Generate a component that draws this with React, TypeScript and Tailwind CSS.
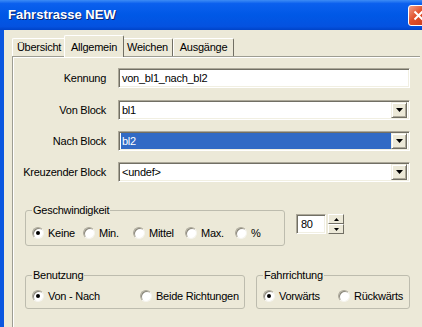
import type { ReactNode } from "react";

const font = { fontFamily: "'Liberation Sans', Arial, sans-serif", letterSpacing: "-0.25px" };

function Sunken({ className = "", children }: { className?: string; children?: ReactNode }) {
  return (
    <div
      className={`flex items-center bg-white border border-t-[#ACA899] border-l-[#ACA899] border-r-white border-b-white shadow-[inset_1px_1px_0_#716F64,inset_-1px_-1px_0_#F1EFE2] ${className}`}
    >
      {children}
    </div>
  );
}

function Arrow({ size = 7 }: { size?: number }) {
  const h = Math.ceil(size / 2);
  return (
    <svg width={size} height={h} viewBox={`0 0 ${size} ${h}`}>
      <polygon points={`0,0 ${size},0 ${size / 2},${h}`} fill="#000" />
    </svg>
  );
}

function Combo({ value, selected = false }: { value: string; selected?: boolean }) {
  return (
    <Sunken className="h-[20px] w-[292px] pl-[2px] pr-[2px]">
      <div
        className={`flex-1 h-[16px] flex items-center pl-[1px] text-[11px] ${
          selected ? "bg-[#316AC5] text-white" : "text-black"
        }`}
      >
        {value}
      </div>
      <div className="w-[16px] h-[16px] flex items-center justify-center bg-[#ECE9D8] border border-t-[#F1EFE2] border-l-[#F1EFE2] border-r-[#716F64] border-b-[#716F64] shadow-[inset_1px_1px_0_#fff,inset_-1px_-1px_0_#ACA899]">
        <Arrow />
      </div>
    </Sunken>
  );
}

function Radio({ label, checked = false, width }: { label: string; checked?: boolean; width: string }) {
  return (
    <div className={`flex items-center gap-[4px] ${width}`}>
      <div className="w-[12px] h-[12px] rounded-full bg-white border border-t-[#ACA899] border-l-[#ACA899] border-r-[#F5F4EE] border-b-[#F5F4EE] shadow-[inset_1px_1px_0_#8a877a] flex items-center justify-center shrink-0">
        {checked && <div className="w-[4px] h-[4px] rounded-full bg-black" />}
      </div>
      <span className="text-[11px] text-black whitespace-nowrap">{label}</span>
    </div>
  );
}

function Group({ title, className = "", children }: { title: string; className?: string; children: ReactNode }) {
  return (
    <fieldset className={`border border-[#BDBCAE] rounded-[3px] ${className}`}>
      <legend className="px-[1px] text-[11px] leading-[13px] text-black">{title}</legend>
      {children}
    </fieldset>
  );
}

const tabs = ["Übersicht", "Allgemein", "Weichen", "Ausgänge"];
const tabWidths = ["w-[54px]", "w-[60px]", "w-[51px]", "w-[61px]"];

export default function App() {
  return (
    <div className="w-[422px] h-[327px] overflow-hidden bg-[#ECE9D8]" style={font}>
      <div className="w-[436px]">
        <div className="h-[30px] flex items-center justify-between pl-[8px] pr-[7px] bg-[linear-gradient(180deg,#3d8cf5_0%,#0b60ee_12%,#0058e6_50%,#0452e0_88%,#0043c8_100%)]">
          <span className="text-white font-bold text-[13px] tracking-normal [text-shadow:1px_1px_0_#0a246a]">Fahrstrasse NEW</span>
          <div className="w-[21px] h-[21px] rounded-[3px] border border-white bg-[linear-gradient(135deg,#f2a08a,#e0502a_45%,#c8391a)] flex items-center justify-center">
            <svg width="11" height="11" viewBox="0 0 11 11">
              <path d="M1.5 1.5 L9.5 9.5 M9.5 1.5 L1.5 9.5" stroke="#fff" strokeWidth="2" />
            </svg>
          </div>
        </div>

        <div className="border-l-[4px] border-[#0a56e0] h-[297px] pt-[5px] pl-[8px]">
          <div className="flex items-end h-[21px]">
            {tabs.map((t, i) =>
              i === 1 ? (
                <div
                  key={t}
                  className={`relative z-10 -mx-[2px] -mb-[1px] h-[22px] ${tabWidths[i]} bg-[#ECE9D8] rounded-t-[2px] border border-b-0 border-t-white border-l-white border-r-[#716F64] flex items-start justify-center pt-[3px] text-[11px] text-black`}
                >
                  {t}
                </div>
              ) : (
                <div
                  key={t}
                  className={`h-[18px] ${tabWidths[i]} bg-[#ECE9D8] rounded-t-[2px] border border-b-0 border-t-white border-l-white border-r-[#716F64] flex items-center justify-center text-[11px] text-black`}
                >
                  {t}
                </div>
              )
            )}
          </div>

          <div className="w-[408px] h-[280px] border-t border-l border-[#9D9D92] shadow-[inset_1px_1px_0_#fff] pt-[11px]">
            <div className="flex items-center gap-[12px]">
              <span className="w-[93px] text-right text-[11px] text-black">Kennung</span>
              <Sunken className="h-[20px] w-[292px] pl-[3px]">
                <span className="text-[11px] text-black">von_bl1_nach_bl2</span>
              </Sunken>
            </div>
            <div className="flex items-center gap-[12px] mt-[12px]">
              <span className="w-[93px] text-right text-[11px] text-black">Von Block</span>
              <Combo value="bl1" />
            </div>
            <div className="flex items-center gap-[12px] mt-[11px]">
              <span className="w-[93px] text-right text-[11px] text-black">Nach Block</span>
              <Combo value="bl2" selected />
            </div>
            <div className="flex items-center gap-[12px] mt-[11px]">
              <span className="w-[93px] text-right text-[11px] text-black">Kreuzender Block</span>
              <Combo value="<undef>" />
            </div>

            <div className="flex items-start mt-[22px] ml-[12px]">
              <Group title="Geschwindigkeit" className="w-[260px] h-[42px] pl-[6px] pt-[8px]">
                <div className="flex items-center">
                  <Radio label="Keine" checked width="w-[51px]" />
                  <Radio label="Min." width="w-[50px]" />
                  <Radio label="Mittel" width="w-[52px]" />
                  <Radio label="Max." width="w-[50px]" />
                  <Radio label="%" width="w-[40px]" />
                </div>
              </Group>
              <div className="flex items-start ml-[11px] mt-[10px]">
                <Sunken className="h-[20px] w-[30px] pl-[4px]">
                  <span className="text-[11px] text-black">80</span>
                </Sunken>
                <div className="ml-[2px] flex flex-col">
                  {[0, 1].map((k) => (
                    <div
                      key={k}
                      className="w-[16px] h-[10px] flex items-center justify-center bg-[#ECE9D8] border border-t-white border-l-white border-r-[#716F64] border-b-[#716F64]"
                    >
                      <div className={k === 0 ? "rotate-180" : ""}>
                        <Arrow size={5} />
                      </div>
                    </div>
                  ))}
                </div>
              </div>
            </div>

            <div className="flex items-start mt-[23px] ml-[12px]">
              <Group title="Benutzung" className="w-[220px] h-[40px] pl-[6px] pt-[6px]">
                <div className="flex items-center">
                  <Radio label="Von - Nach" checked width="w-[108px]" />
                  <Radio label="Beide Richtungen" width="w-[100px]" />
                </div>
              </Group>
              <Group title="Fahrrichtung" className="ml-[11px] w-[154px] h-[40px] pl-[6px] pt-[6px]">
                <div className="flex items-center">
                  <Radio label="Vorwärts" checked width="w-[75px]" />
                  <Radio label="Rückwärts" width="w-[70px]" />
                </div>
              </Group>
            </div>
          </div>
        </div>
      </div>
    </div>
  );
}
